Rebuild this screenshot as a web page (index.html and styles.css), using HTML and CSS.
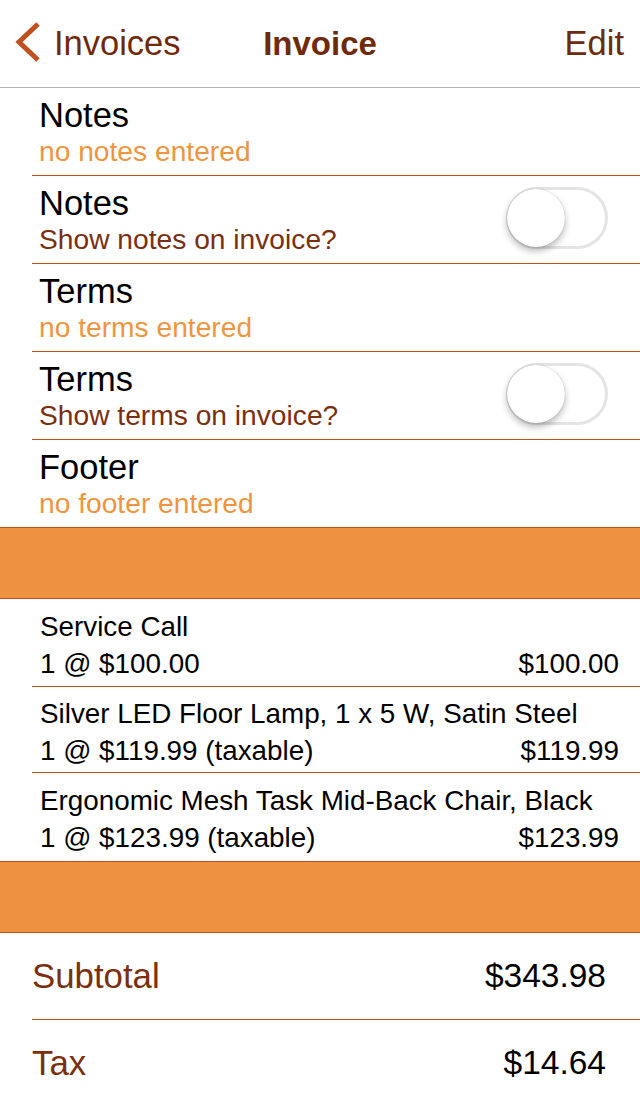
FILE: index.html
```html
<!DOCTYPE html>
<html lang="en">
  <head>
    <meta charset="UTF-8" />
    <meta name="viewport" content="width=device-width, initial-scale=1.0" />
    <title>Invoice</title>
    <link rel="stylesheet" href="styles.css">
  </head>
  <body>
    <div class="navbar">
      <a class="nav-back" href="#">
        <svg class="chevron" width="30" height="48" viewBox="0 0 30 48">
          <polyline points="24,4 5,22 24,40" />
        </svg>
        <span>Invoices</span>
      </a>
      <div class="nav-title">Invoice</div>
      <a class="nav-edit" href="#">Edit</a>
    </div>

    <div class="section">
      <div class="cell">
        <div class="cell-text">
          <div class="cell-title">Notes</div>
          <div class="cell-sub placeholder">no notes entered</div>
        </div>
      </div>
      <div class="cell">
        <div class="cell-text">
          <div class="cell-title">Notes</div>
          <div class="cell-sub">Show notes on invoice?</div>
        </div>
        <div class="switch"><div class="knob"></div></div>
      </div>
      <div class="cell">
        <div class="cell-text">
          <div class="cell-title">Terms</div>
          <div class="cell-sub placeholder">no terms entered</div>
        </div>
      </div>
      <div class="cell">
        <div class="cell-text">
          <div class="cell-title">Terms</div>
          <div class="cell-sub">Show terms on invoice?</div>
        </div>
        <div class="switch"><div class="knob"></div></div>
      </div>
      <div class="cell last">
        <div class="cell-text">
          <div class="cell-title">Footer</div>
          <div class="cell-sub placeholder">no footer entered</div>
        </div>
      </div>
    </div>

    <div class="band"></div>

    <div class="section">
      <div class="item">
        <div class="item-name">Service Call</div>
        <div class="item-line"><span>1 @ $100.00</span><span>$100.00</span></div>
      </div>
      <div class="item">
        <div class="item-name">Silver LED Floor Lamp, 1 x 5 W, Satin Steel</div>
        <div class="item-line"><span>1 @ $119.99 (taxable)</span><span>$119.99</span></div>
      </div>
      <div class="item last">
        <div class="item-name">Ergonomic Mesh Task Mid-Back Chair, Black</div>
        <div class="item-line"><span>1 @ $123.99 (taxable)</span><span>$123.99</span></div>
      </div>
    </div>

    <div class="band"></div>

    <div class="section">
      <div class="total">
        <span class="total-label">Subtotal</span>
        <span class="total-value">$343.98</span>
      </div>
      <div class="total">
        <span class="total-label">Tax</span>
        <span class="total-value">$14.64</span>
      </div>
    </div>
  </body>
</html>
```

FILE: styles.css
```css
body {
  font-family: "Liberation Sans", Arial, sans-serif;
  margin: 0;
  background-color: white;
  color: black;
  overflow: hidden;
}
a {
  text-decoration: none;
}

/* top bar */
.navbar {
  height: 87px;
  border-bottom: 1px solid #b2b2b2;
  display: grid;
  grid-template-columns: 1fr auto 1fr;
  align-items: center;
  font-size: 34.5px;
  color: #6e2a0b;
}
.nav-back {
  display: flex;
  align-items: center;
  color: #6e2a0b;
  margin-left: 14px;
}
.chevron {
  margin-right: 10px;
}
.chevron polyline {
  fill: none;
  stroke: #c0501e;
  stroke-width: 5;
}
.nav-title {
  font-weight: bold;
  font-size: 33px;
  text-align: center;
}
.nav-edit {
  justify-self: end;
  margin-right: 16px;
  color: #6e2a0b;
}

/* settings cells */
.cell {
  margin-left: 32px;
  height: 87px;
  border-bottom: 1px solid #c1521f;
  padding-left: 7px;
  padding-right: 32px;
  display: flex;
  align-items: center;
  justify-content: space-between;
}
.cell.last {
  border-bottom: none;
}
.cell-title {
  font-size: 34.5px;
  line-height: 38px;
}
.cell-sub {
  font-size: 28.2px;
  line-height: 34px;
  color: #7a2f0e;
}
.cell-sub.placeholder {
  color: #f0953f;
}

.switch {
  width: 102px;
  height: 62px;
  box-sizing: border-box;
  border: 3px solid #e4e4e4;
  border-radius: 31px;
  display: flex;
  align-items: center;
  margin-top: -3px;
}
.knob {
  width: 58px;
  height: 58px;
  margin-left: -2px;
  border-radius: 50%;
  background-color: white;
  box-shadow: 0 4px 7px rgba(0, 0, 0, 0.28), 0 0 1px rgba(0, 0, 0, 0.25);
}

.band {
  height: 70px;
  background-color: #ee9140;
  border-top: 1px solid #c1521f;
  border-bottom: 1px solid #c1521f;
}

/* line items */
.item {
  margin-left: 32px;
  height: 86px;
  border-bottom: 1px solid #c1521f;
  padding: 4px 21px 0 8px;
  box-sizing: border-box;
  font-size: 27.8px;
  line-height: 37px;
  display: flex;
  flex-direction: column;
  justify-content: center;
}
.item:first-child {
  height: 88px;
}
.item.last {
  border-bottom: none;
  height: 88px;
}
.item-line {
  display: flex;
  justify-content: space-between;
}

/* totals */
.total {
  margin-left: 32px;
  height: 86px;
  border-bottom: 1px solid #c1521f;
  padding-right: 34px;
  display: flex;
  align-items: center;
  justify-content: space-between;
  font-size: 34.8px;
}
.total-label {
  color: #7a2f0e;
}
.total-value {
  font-size: 33.5px;
}
```
